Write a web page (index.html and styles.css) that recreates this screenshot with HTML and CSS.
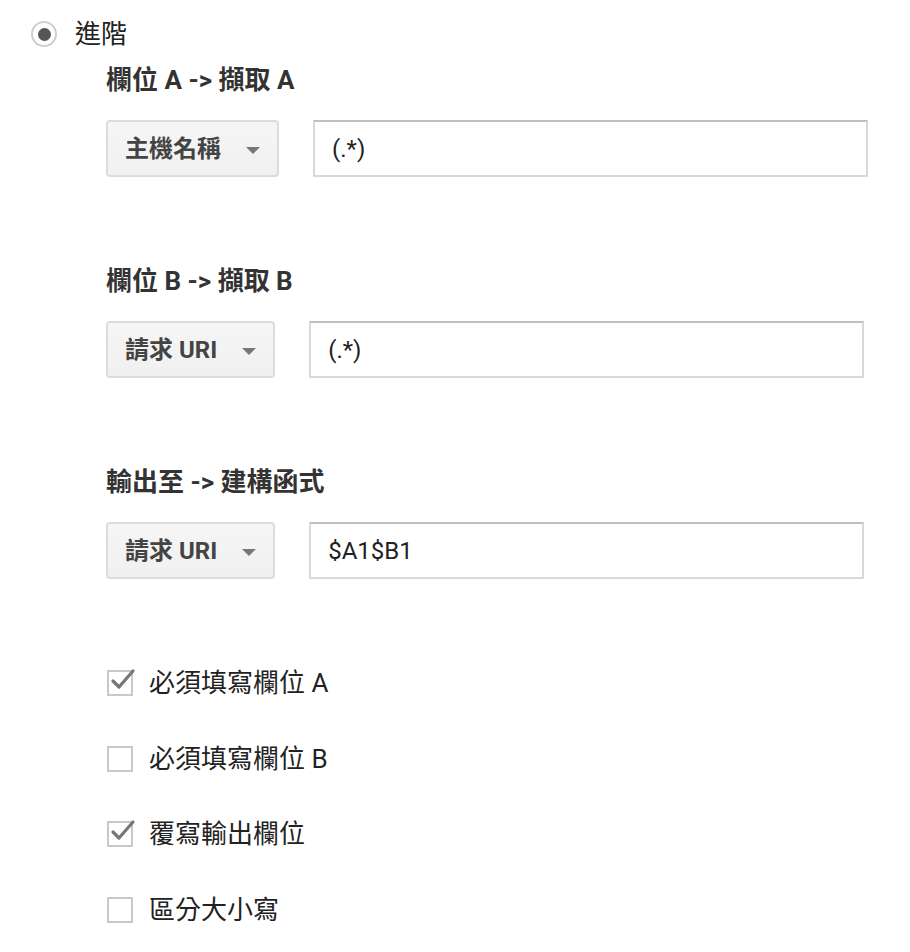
FILE: index.html
```html
<!DOCTYPE html>
<html lang="zh-Hant">
<head>
<meta charset="utf-8">
<title>進階</title>
<link rel="stylesheet" href="styles.css">
</head>
<body>
<div class="page">
  <label class="radio-row">
    <span class="radio"><span class="radio-dot"></span></span>
    <span class="radio-label">進階</span>
  </label>
  <div class="section">
    <div class="group">
      <div class="heading">欄位 A -&gt; 擷取 A</div>
      <div class="field-row">
        <div class="select"><span class="select-text">主機名稱</span><span class="arrow"></span></div>
        <div class="input">(.*)</div>
      </div>
    </div>
    <div class="group">
      <div class="heading">欄位 B -&gt; 擷取 B</div>
      <div class="field-row">
        <div class="select"><span class="select-text">請求 URI</span><span class="arrow"></span></div>
        <div class="input">(.*)</div>
      </div>
    </div>
    <div class="group">
      <div class="heading">輸出至 -&gt; 建構函式</div>
      <div class="field-row">
        <div class="select"><span class="select-text">請求 URI</span><span class="arrow"></span></div>
        <div class="input">$A1$B1</div>
      </div>
    </div>
    <div class="checks">
      <label class="check-row">
        <span class="checkbox"><svg class="tick" viewBox="0 0 30 28" width="30" height="28"><path d="M6 15 L12 21 L26 5" fill="none" stroke="#777" stroke-width="3.2" stroke-linecap="round" stroke-linejoin="round"/></svg></span>
        <span class="check-label">必須填寫欄位 A</span>
      </label>
      <label class="check-row">
        <span class="checkbox"></span>
        <span class="check-label">必須填寫欄位 B</span>
      </label>
      <label class="check-row">
        <span class="checkbox"><svg class="tick" viewBox="0 0 30 28" width="30" height="28"><path d="M6 15 L12 21 L26 5" fill="none" stroke="#777" stroke-width="3.2" stroke-linecap="round" stroke-linejoin="round"/></svg></span>
        <span class="check-label">覆寫輸出欄位</span>
      </label>
      <label class="check-row">
        <span class="checkbox"></span>
        <span class="check-label">區分大小寫</span>
      </label>
    </div>
  </div>
</div>
</body>
</html>
```
FILE: styles.css
```css
html, body {
  margin: 0;
  padding: 0;
  background: #fff;
}
body {
  font-family: Roboto, "Noto Sans CJK TC", sans-serif;
  color: #222;
}
.page {
  padding: 20px 0 0 31px;
}
.radio-row {
  display: flex;
  align-items: center;
  height: 28px;
  gap: 18px;
}
.radio {
  box-sizing: border-box;
  width: 26px;
  height: 26px;
  border: 2px solid #cfcfcf;
  border-radius: 50%;
  display: flex;
  align-items: center;
  justify-content: center;
}
.radio-dot {
  width: 13px;
  height: 13px;
  border-radius: 50%;
  background: #555;
}
.radio-label {
  font-size: 26px;
  line-height: 28px;
  color: #222;
}
.section {
  margin-left: 75px;
  padding-top: 17px;
}
.group {
  margin-bottom: 89px;
}
.heading {
  font-size: 26px;
  font-weight: bold;
  line-height: 30px;
  color: #333;
  margin-bottom: 25px;
}
.field-row {
  display: flex;
  align-items: stretch;
  gap: 34px;
  height: 57px;
}
.select {
  box-sizing: border-box;
  display: flex;
  align-items: center;
  padding: 0 17px 0 17px;
  background: linear-gradient(#f6f6f6, #f0f0f0);
  border: 2px solid #dcdcdc;
  border-radius: 4px;
}
.select-text {
  font-size: 24px;
  font-weight: bold;
  color: #444;
  line-height: 28px;
}
.arrow {
  margin-left: 25px;
  width: 0;
  height: 0;
  border-left: 7px solid transparent;
  border-right: 7px solid transparent;
  border-top: 7px solid #777;
  margin-top: 3px;
}
.input {
  box-sizing: border-box;
  width: 555px;
  display: flex;
  align-items: center;
  padding-left: 17px;
  font-size: 24px;
  color: #222;
  border: 2px solid #d9d9d9;
  border-top-color: #c0c0c0;
}
.checks {
  margin-top: 1px;
  display: flex;
  flex-direction: column;
  gap: 45.5px;
}
.check-row {
  display: flex;
  align-items: center;
  height: 30px;
  gap: 16px;
}
.checkbox {
  position: relative;
  box-sizing: border-box;
  width: 26px;
  height: 26px;
  border: 2px solid #c8c8c8;
  margin-left: 1px;
}
.tick {
  position: absolute;
  left: -2px;
  top: -6px;
}
.check-label {
  font-size: 26px;
  line-height: 30px;
  color: #222;
}
```
